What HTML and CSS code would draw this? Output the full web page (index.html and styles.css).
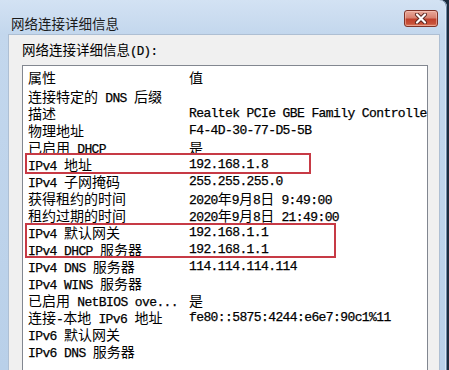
FILE: index.html
```html
<!DOCTYPE html>
<html lang="zh-CN">
<head>
    <meta charset="UTF-8">
    <title>网络连接详细信息</title>
    <link rel="stylesheet" href="styles.css">
</head>
<body>
    <div class="window">
        <!-- Title bar -->
        <div class="titlebar">
            <span class="titlebar__text">网络连接详细信息</span>
            <div class="close-btn">
                <svg width="14" height="11" viewBox="0 0 14 11">
                    <path d="M3 1.5 L11 9.5 M11 1.5 L3 9.5" stroke="#5a2620" stroke-width="4" stroke-linecap="round"/>
                    <path d="M3 1.5 L11 9.5 M11 1.5 L3 9.5" stroke="#fff" stroke-width="2.2" stroke-linecap="round"/>
                </svg>
            </div>
        </div>

        <!-- Client area -->
        <div class="client">
            <div class="label"><span class="zh">网络连接详细信息</span>(D):</div>

            <div class="list">
                <div class="list__row list__row--head">
                    <span class="zh">属性</span>
                    <span class="zh">值</span>
                </div>
                <div class="list__row">
                    <span><span class="zh">连接特定的</span> DNS <span class="zh">后缀</span></span>
                    <span></span>
                </div>
                <div class="list__row">
                    <span class="zh">描述</span>
                    <span>Realtek PCIe GBE Family Controller</span>
                </div>
                <div class="list__row">
                    <span class="zh">物理地址</span>
                    <span>F4-4D-30-77-D5-5B</span>
                </div>
                <div class="list__row">
                    <span><span class="zh">已启用</span> DHCP</span>
                    <span class="zh">是</span>
                </div>
                <div class="list__row">
                    <span>IPv4 <span class="zh">地址</span></span>
                    <span>192.168.1.8</span>
                </div>
                <div class="list__row">
                    <span>IPv4 <span class="zh">子网掩码</span></span>
                    <span>255.255.255.0</span>
                </div>
                <div class="list__row">
                    <span class="zh">获得租约的时间</span>
                    <span>2020<span class="zh">年</span>9<span class="zh">月</span>8<span class="zh">日</span> 9:49:00</span>
                </div>
                <div class="list__row">
                    <span class="zh">租约过期的时间</span>
                    <span>2020<span class="zh">年</span>9<span class="zh">月</span>8<span class="zh">日</span> 21:49:00</span>
                </div>
                <div class="list__row">
                    <span>IPv4 <span class="zh">默认网关</span></span>
                    <span>192.168.1.1</span>
                </div>
                <div class="list__row">
                    <span>IPv4 DHCP <span class="zh">服务器</span></span>
                    <span>192.168.1.1</span>
                </div>
                <div class="list__row">
                    <span>IPv4 DNS <span class="zh">服务器</span></span>
                    <span>114.114.114.114</span>
                </div>
                <div class="list__row">
                    <span>IPv4 WINS <span class="zh">服务器</span></span>
                    <span></span>
                </div>
                <div class="list__row">
                    <span><span class="zh">已启用</span> NetBIOS ove...</span>
                    <span class="zh">是</span>
                </div>
                <div class="list__row">
                    <span><span class="zh">连接</span>-<span class="zh">本地</span> IPv6 <span class="zh">地址</span></span>
                    <span>fe80::5875:4244:e6e7:90c1%11</span>
                </div>
                <div class="list__row">
                    <span>IPv6 <span class="zh">默认网关</span></span>
                    <span></span>
                </div>
                <div class="list__row">
                    <span>IPv6 DNS <span class="zh">服务器</span></span>
                    <span></span>
                </div>

                <!-- highlight boxes -->
                <div class="mark mark--addr"></div>
                <div class="mark mark--gw"></div>
            </div>
        </div>
    </div>
</body>
</html>
```

FILE: styles.css
```css
* {
    box-sizing: border-box;
    margin: 0;
    padding: 0;
}

body {
    background: #1c2b3d;
    width: 449px;
    height: 370px;
    overflow: hidden;
}

.zh {
    font-family: "Noto Sans CJK SC", sans-serif;
    font-size: 14px;
    letter-spacing: 0;
}

/* window frame */
.window {
    width: 447px;
    height: 370px;
    display: flex;
    flex-direction: column;
    padding: 0 7px 0 8px;
    background: linear-gradient(#d3e2f3 0px, #c3d7ed 34px, #b9d0e9 100%);
    border-radius: 0 7px 0 0;
    box-shadow: inset -1px 0 0 #6d88a6, inset -2px 0 0 #dbe7f4;
}

.titlebar {
    height: 34px;
    display: flex;
    justify-content: space-between;
    align-items: flex-start;
    padding: 0 2px 0 3px;
}

.titlebar__text {
    font-family: "Noto Sans CJK SC", sans-serif;
    font-size: 13.5px;
    line-height: 16px;
    margin-top: 15px;
    color: #1a1a1a;
}

.close-btn {
    width: 34px;
    height: 17px;
    margin-top: 10px;
    display: flex;
    align-items: center;
    justify-content: center;
    border: 1px solid #7f3328;
    border-radius: 3px;
    background: linear-gradient(#e9a99b 0%, #d88271 45%, #c0412c 55%, #c8523a 85%, #e0866a 100%);
    box-shadow: inset 0 0 0 1px rgba(255, 210, 200, 0.45);
}

/* client area */
.client {
    flex: 1;
    background: #f0f0f0;
    border: 1px solid #aebfd3;
    border-bottom: none;
    padding: 6px 11px 0 13px;
    display: flex;
    flex-direction: column;
}

.label {
    font-family: "Liberation Mono", monospace;
    font-size: 12.5px;
    letter-spacing: -0.7px;
    line-height: 16px;
    color: #000;
    -webkit-text-stroke: 0.2px #000;
}

.label .zh {
    font-size: 13.5px;
    -webkit-text-stroke: 0;
}

.list {
    position: relative;
    margin-top: 5px;
    flex: 1;
    background: #fff;
    border: 1px solid #828790;
    border-bottom: none;
    overflow: hidden;
}

.list__row {
    display: grid;
    grid-template-columns: 161px 1fr;
    padding-left: 5px;
    height: 17px;
    line-height: 17px;
    font-family: "Liberation Mono", "Noto Sans CJK SC", monospace;
    font-size: 13px;
    letter-spacing: -0.6px;
    color: #000;
    white-space: nowrap;
    -webkit-text-stroke: 0.25px #000;
}

.list__row span {
    overflow-x: clip;
}

.list__row .zh {
    -webkit-text-stroke: 0;
}

.list__row--head {
    height: 22px;
    line-height: 22px;
}

/* red boxes drawn over the list */
.mark {
    position: absolute;
    left: 2px;
    border: 2px solid #c73a45;
}

.mark--addr {
    top: 87px;
    width: 286px;
    height: 21px;
}

.mark--gw {
    top: 157px;
    width: 311px;
    height: 35px;
}
```
